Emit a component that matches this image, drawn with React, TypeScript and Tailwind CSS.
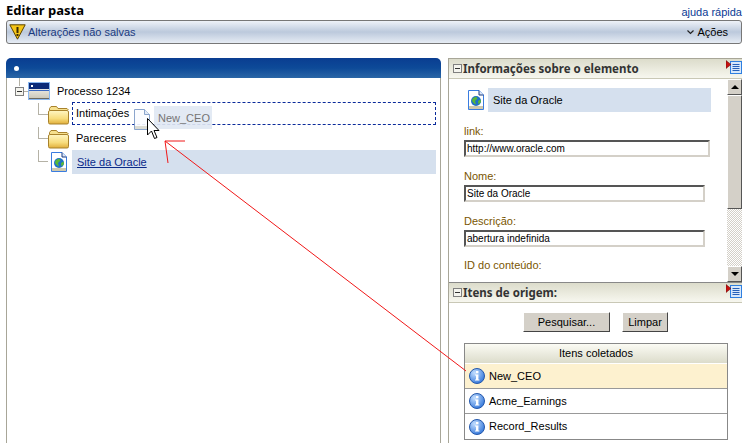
import React from 'react';

const FolderIcon = () => (
  <svg width="22" height="20" viewBox="0 0 22 20" className="shrink-0">
    <defs>
      <linearGradient id="fold" x1="0" y1="0" x2="0" y2="1">
        <stop offset="0" stopColor="#fff6c4" />
        <stop offset="0.6" stopColor="#f7dc7c" />
        <stop offset="1" stopColor="#e0ae3a" />
      </linearGradient>
    </defs>
    <path d="M1.5 5V3.5L3 1.5H8.5L10 3.5H19L20.5 5" fill="#f6e08e" stroke="#a8822c" />
    <rect x="0.5" y="5.5" width="20" height="13.5" rx="1.5" fill="url(#fold)" stroke="#a8822c" />
  </svg>
);

const WindowIcon = () => (
  <svg width="22" height="18" viewBox="0 0 22 18" className="shrink-0">
    <defs>
      <linearGradient id="win" x1="0" y1="0" x2="0" y2="1">
        <stop offset="0" stopColor="#ffffff" />
        <stop offset="1" stopColor="#c8c4b4" />
      </linearGradient>
    </defs>
    <rect x="0.5" y="0.5" width="21" height="17" fill="url(#win)" stroke="#8ab8f0" />
    <rect x="1" y="1" width="20" height="6" fill="#0b2a78" />
    <rect x="3" y="3" width="2" height="2" fill="#fff" />
    <rect x="1" y="8" width="20" height="1" fill="#3a68c0" />
    <rect x="1" y="16" width="20" height="1" fill="#6c6a60" />
  </svg>
);

const GlobeDocIcon = () => (
  <svg width="16" height="20" viewBox="0 0 16 20" className="shrink-0">
    <path d="M0.5 0.5H11L15.5 5V19.5H0.5Z" fill="#fff" stroke="#3a7ce0" />
    <path d="M11 0.5V5H15.5" fill="#dfe8f6" stroke="#1a3a80" />
    <rect x="1" y="16" width="14" height="3" fill="#cfc9ad" />
    <circle cx="8" cy="11" r="5" fill="#1f70c8" />
    <path d="M4.5 8.5l3.5-2 1.5 2-2.5 2.5 1 3.5-2-1-2-2.5zM10 11l2.5-1.5.5 2.5-2.5 2.5z" fill="#58b838" />
  </svg>
);

const InfoIcon = () => (
  <svg width="16" height="16" viewBox="0 0 16 16" className="shrink-0">
    <defs>
      <radialGradient id="info" cx="0.35" cy="0.3" r="0.8">
        <stop offset="0" stopColor="#c5e0ff" />
        <stop offset="1" stopColor="#2a70d8" />
      </radialGradient>
    </defs>
    <circle cx="8" cy="8" r="7.5" fill="url(#info)" stroke="#2458ac" />
    <rect x="7" y="3" width="2.4" height="2.2" fill="#fff" />
    <path d="M6 6.5H9.4V11.5H10.4V12.6H6V11.5H7V7.6H6Z" fill="#fff" />
  </svg>
);

const WarnIcon = () => (
  <svg width="17" height="16" viewBox="0 0 17 16" className="shrink-0">
    <path d="M0.8 0.8H16.2L8.5 15.2Z" fill="#f5c518" stroke="#5b4300" />
    <rect x="7.5" y="3" width="2" height="6" fill="#3a2a00" />
    <rect x="7.5" y="10" width="2" height="2" fill="#3a2a00" />
  </svg>
);

const PanelMenuIcon = () => (
  <svg width="16" height="14" viewBox="0 0 16 14" className="absolute right-0 top-[1px]">
    <rect x="4.5" y="1.5" width="11" height="12" fill="#d7e8fb" stroke="#2f7fe0" />
    <path d="M6.5 4.5h7M6.5 6.5h7M6.5 8.5h7M6.5 10.5h7" stroke="#2660b8" />
    <path d="M0 0.5L5 4.5L0 8.5Z" fill="#c81010" stroke="#5a0808" strokeWidth="0.5" />
  </svg>
);

const MinusBox = () => (
  <span className="w-[9px] h-[9px] shrink-0 border border-[#808080] bg-[#f4f4ee] flex items-center justify-center">
    <span className="w-[5px] h-px bg-[#333]" />
  </span>
);

const TreeRow = ({ children, h }: { children: React.ReactNode; h: string }) => (
  <div className={`flex items-center ${h}`}>
    <div className="w-[10px] h-1/2 self-start border-l border-b border-[#b5b2a6] shrink-0" />
    {children}
  </div>
);

const Field = ({ label, value, w }: { label: string; value: string; w: string }) => (
  <div>
    <div className="text-[#7a5600] h-[17px] leading-[17px]">{label}</div>
    <div className={`${w} h-[17px] border-2 border-t-[#555] border-l-[#555] border-r-[#d4d0c8] border-b-[#d4d0c8] text-[10px] leading-[13px] text-black pl-px overflow-hidden`}>
      {value}
    </div>
  </div>
);

const SectionHeader = ({ title }: { title: string }) => (
  <div className="relative h-[20px] flex items-center gap-[1px] pl-[4px] bg-gradient-to-b from-[#dcdccb] to-[#f7f7ef] border-b border-[#c9c8b6] text-[11.5px] font-bold text-[#333] shrink-0 font-['Noto_Sans',sans-serif]">
    <MinusBox />
    <span>{title}</span>
    <PanelMenuIcon />
  </div>
);

const ScrollButton = ({ up }: { up: boolean }) => (
  <div className="h-[16px] bg-[#d4d0c8] border border-t-white border-l-white border-r-[#555] border-b-[#555] flex items-center justify-center shrink-0">
    <span className={`w-0 h-0 border-x-[4px] border-x-transparent ${up ? 'border-b-[4px] border-b-black' : 'border-t-[4px] border-t-black'}`} />
  </div>
);

const ListRow = ({ label, active }: { label: string; active?: boolean }) => (
  <div className={`h-[25px] flex items-center gap-[4px] pl-[4px] border-b border-[#999] last:border-b-0 ${active ? 'bg-[#fdf1cf]' : 'bg-white'}`}>
    <InfoIcon />
    <span>{label}</span>
  </div>
);

const Button = ({ label, w }: { label: string; w: string }) => (
  <button className={`${w} h-[20px] bg-[#d4d0c8] border border-t-white border-l-white border-r-[#444] border-b-[#444] text-[11px] text-black`}>
    {label}
  </button>
);

export default function App() {
  return (
    <div className="relative w-[748px] h-[443px] overflow-hidden bg-white text-[11px] text-black font-['Liberation_Sans',Arial,sans-serif]">
      <div className="h-[20px] px-[6px] flex items-start justify-between">
        <span className="text-[13px] font-bold leading-[20px] font-['Noto_Sans',sans-serif]">Editar pasta</span>
        <a className="text-[#0a3a94] leading-[24px]">ajuda rápida</a>
      </div>

      <div className="mx-[6px] h-[24px] rounded-[3px] border border-[#777] bg-gradient-to-b from-[#eef2f8] via-[#bcc9dc] to-[#e6ecf4] flex items-center justify-between pl-[2px] pr-[13px]">
        <div className="flex items-center gap-[2px] text-[#1a3a80]">
          <WarnIcon />
          <span>Alterações não salvas</span>
        </div>
        <div className="flex items-center gap-[3px]">
          <svg width="7" height="5" viewBox="0 0 7 5">
            <path d="M0.5 0.5L3.5 3.5L6.5 0.5" fill="none" stroke="#222" strokeWidth="1.2" />
          </svg>
          <span>Ações</span>
        </div>
      </div>

      <div className="mt-[14px] px-[6px] flex gap-[7px] h-[385px]">
        {/* tree */}
        <div className="w-[435px] flex flex-col shrink-0">
          <div className="h-[20px] rounded-t-[5px] bg-gradient-to-b from-[#0a3d91] via-[#0d4a98] to-[#2a66a6] flex items-center pl-[8px] shrink-0">
            <span className="w-[5px] h-[5px] rounded-full bg-white" />
          </div>
          <div className="flex-1 border-x border-[#a8a698] pl-[8px] pr-[4px]">
            <div className="h-[26px] flex items-center relative">
              <MinusBox />
              <div className="absolute left-[4px] top-0 h-[8px] border-l border-[#b5b2a6]" />
              <div className="w-[4px] h-px bg-[#b5b2a6] shrink-0" />
              <WindowIcon />
              <span className="ml-[7px]">Processo 1234</span>
            </div>
            <div className="ml-[23px] mt-[-1px]">
              <TreeRow h="h-[24px]">
                <FolderIcon />
                <div className="ml-[2px] flex-1 h-[23px] self-start -mt-[1px] pl-[3px] flex items-center border border-dashed border-[#0a2a9a]">
                  Intimações
                </div>
              </TreeRow>
              <TreeRow h="h-[23px]">
                <FolderIcon />
                <div className="ml-[6px]">Pareceres</div>
              </TreeRow>
              <TreeRow h="h-[24px]">
                <div className="ml-[3px] w-[21px] shrink-0"><GlobeDocIcon /></div>
                <div className="flex-1 h-[24px] pl-[5px] flex items-center bg-[#d5e0ee]">
                  <a className="underline text-[#0a2a8a]">Site da Oracle</a>
                </div>
              </TreeRow>
            </div>
          </div>
        </div>

        {/* right side panels */}
        <div className="w-[294px] flex flex-col border-l border-[#a8a698]">
          <div className="h-[224px] flex flex-col border-t border-[#a8a698] shrink-0">
            <SectionHeader title="Informações sobre o elemento" />
            <div className="flex-1 flex min-h-0">
              <div className="flex-1 pl-[15px] pt-[9px]">
                <div className="flex items-center gap-[4px] ml-[4px] h-[24px]">
                  <GlobeDocIcon />
                  <div className="w-[223px] h-[24px] pl-[5px] flex items-center bg-[#d5e0ee]">Site da Oracle</div>
                </div>
                <div className="mt-[11px] flex flex-col gap-[11px]">
                  <Field label="link:" value="http://www.oracle.com" w="w-[246px]" />
                  <Field label="Nome:" value="Site da Oracle" w="w-[241px]" />
                  <Field label="Descrição:" value="abertura indefinida" w="w-[241px]" />
                  <div className="text-[#7a5600] -mt-[1px]">ID do conteúdo:</div>
                </div>
              </div>
              <div className="w-[15px] flex flex-col shrink-0">
                <ScrollButton up />
                <div className="h-[114px] bg-[#d4d0c8] border border-t-white border-l-white border-r-[#555] border-b-[#555]" />
                <div className="flex-1 bg-[repeating-conic-gradient(#d4d0c8_0_25%,#ffffff_0_50%)] bg-[length:2px_2px]" />
                <ScrollButton up={false} />
              </div>
            </div>
          </div>
          <div className="flex-1 flex flex-col border-t border-[#888]">
            <SectionHeader title="Itens de origem:" />
            <div className="pl-[15px] pr-[14px] pt-[9px]">
              <div className="flex justify-center gap-[12px] pr-[1px]">
                <Button label="Pesquisar..." w="w-[87px]" />
                <Button label="Limpar" w="w-[46px]" />
              </div>
              <div className="mt-[11px] border border-[#888]">
                <div className="h-[20px] flex items-center justify-center bg-gradient-to-b from-[#fbfbf4] to-[#dcdccb] border-b border-white">Itens coletados</div>
                <ListRow label="New_CEO" active />
                <ListRow label="Acme_Earnings" />
                <ListRow label="Record_Results" />
              </div>
            </div>
          </div>
        </div>
      </div>

      {/* drag ghost */}
      <div className="absolute left-[134px] top-[106px] flex items-start gap-[4px] opacity-90">
        <svg width="16" height="21" viewBox="0 0 16 21" className="mt-[3px]">
          <path d="M0.5 0.5H10.5L15.5 5.5V20.5H0.5Z" fill="#fbfcff" stroke="#7f9cc8" />
          <path d="M10.5 0.5V5.5H15.5" fill="#dfe8f6" stroke="#7f9cc8" />
          <rect x="1" y="17" width="14" height="3" fill="#d9d9d0" />
        </svg>
        <div className="w-[58px] h-[23px] bg-[#e1e8f3] text-[#666] pl-[4px] leading-[24px]">New_CEO</div>
      </div>
      <svg width="13" height="22" viewBox="0 0 13 22" className="absolute left-[147px] top-[118px]">
        <path d="M0.5 0.5V17L4.5 13L7.5 20.5L10 19.5L7 12.5H12Z" fill="#fff" stroke="#000" />
      </svg>

      {/* annotation arrow */}
      <svg width="748" height="443" className="absolute inset-0 pointer-events-none">
        <path d="M466 371L165 141M165 141L185 141M165 141L168 163" fill="none" stroke="#f01818" strokeWidth="1" />
      </svg>
    </div>
  );
}
